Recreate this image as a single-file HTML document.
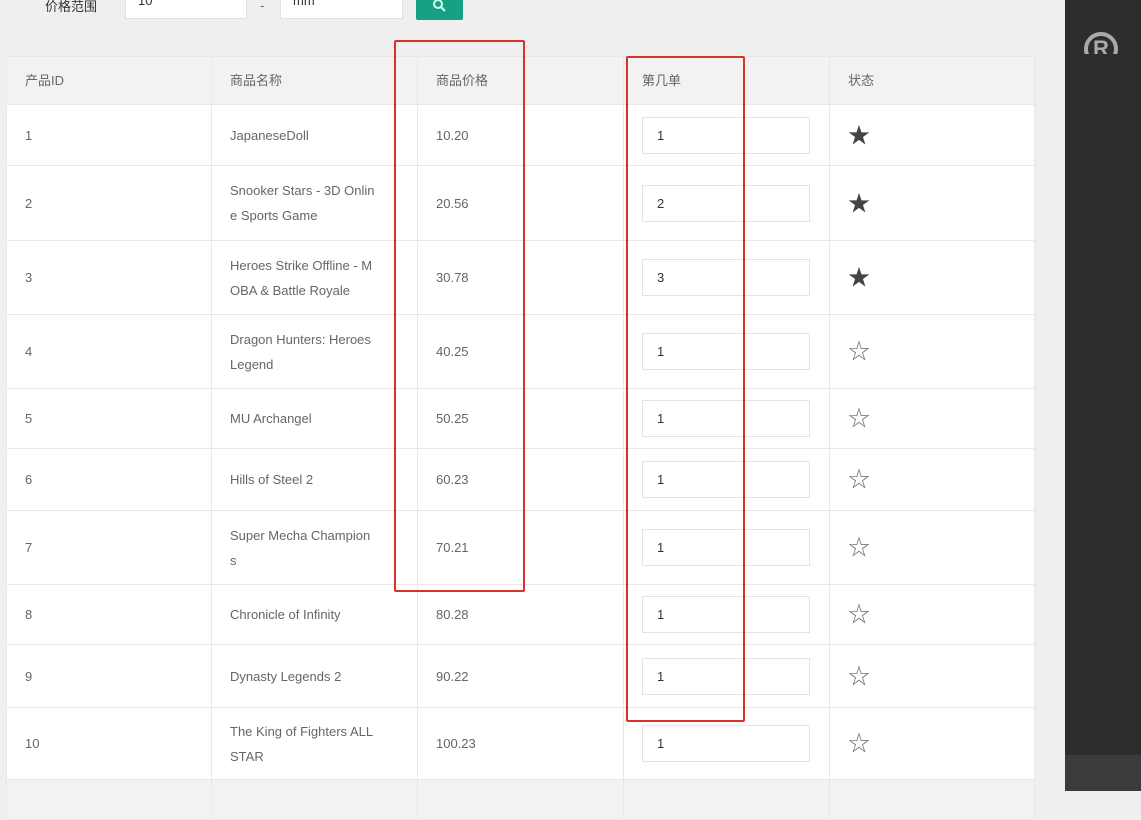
<!DOCTYPE html>
<html><head><meta charset="utf-8"><style>
*{box-sizing:border-box;margin:0;padding:0}
body{width:1141px;height:791px;overflow:hidden;background:#efefef;font-family:"Liberation Sans","Noto Sans CJK SC",sans-serif;font-size:13px;color:#666;position:relative}
.side{position:absolute;left:1065px;top:0;width:76px;height:791px;background:#2d2e2c}
.side2{position:absolute;left:1065px;top:755px;width:76px;height:36px;background:#3b3b3b}
.logo{position:absolute;left:1084px;top:32px;width:36px;height:22px;overflow:hidden}
.logo span{display:block;width:34px;height:34px;border:4px solid #aaa;border-radius:50%;color:#aaa;font-weight:bold;font-size:22px;line-height:26px;text-align:center}
.abs{position:absolute}
.inp{position:absolute;background:#fff;border:1px solid #e3e3e3}
table{position:absolute;left:6px;top:56px;border-collapse:collapse;table-layout:fixed;width:1028px;background:#fff}
td,th{border:1px solid #e8e8e8;padding:0 18px;text-align:left;font-weight:normal;vertical-align:middle;line-height:25px;color:#666;white-space:nowrap;overflow:hidden}
th{background:#f2f2f2;height:48px;color:#666}
td input{display:block;width:168px;height:37px;border:1px solid #e3e3e3;padding-left:14px;font-size:13px;color:#333;font-family:inherit}
.star{font-size:22px;color:#444}
.so{font-size:22px;color:#777}
.red{position:absolute;border:2px solid #d9322a;border-radius:2px}
</style></head><body>
<div class="abs" style="left:45px;top:-4px;color:#333">价格范围</div>
<div class="inp" style="left:125px;top:-10px;width:122px;height:29px;padding:2px 12px;color:#333">10</div>
<div class="abs" style="left:260px;top:-2px">-</div>
<div class="inp" style="left:280px;top:-10px;width:123px;height:29px;padding:2px 12px;color:#333">mm</div>
<div class="abs" style="left:416px;top:-10px;width:47px;height:30px;background:#16a085;border-radius:2px"><svg width="47" height="30"><circle cx="22" cy="14" r="4" fill="none" stroke="#cfe" stroke-width="2"/><path d="M25 17l4 4" stroke="#cfe" stroke-width="2"/></svg></div>
<table>
<colgroup><col style="width:205px"><col style="width:206px"><col style="width:206px"><col style="width:206px"><col style="width:205px"></colgroup>
<tr><th>产品ID</th><th>商品名称</th><th>商品价格</th><th>第几单</th><th>状态</th></tr>
<tr style="height:61px"><td>1</td><td>JapaneseDoll</td><td>10.20</td><td><input value="1"></td><td class="star">★</td></tr>
<tr style="height:75px"><td>2</td><td>Snooker Stars - 3D Onlin<br>e Sports Game</td><td>20.56</td><td><input value="2"></td><td class="star">★</td></tr>
<tr style="height:74px"><td>3</td><td>Heroes Strike Offline - M<br>OBA &amp; Battle Royale</td><td>30.78</td><td><input value="3"></td><td class="star">★</td></tr>
<tr style="height:74px"><td>4</td><td>Dragon Hunters: Heroes<br>Legend</td><td>40.25</td><td><input value="1"></td><td class="so">☆</td></tr>
<tr style="height:60px"><td>5</td><td>MU Archangel</td><td>50.25</td><td><input value="1"></td><td class="so">☆</td></tr>
<tr style="height:62px"><td>6</td><td>Hills of Steel 2</td><td>60.23</td><td><input value="1"></td><td class="so">☆</td></tr>
<tr style="height:74px"><td>7</td><td>Super Mecha Champion<br>s</td><td>70.21</td><td><input value="1"></td><td class="so">☆</td></tr>
<tr style="height:60px"><td>8</td><td>Chronicle of Infinity</td><td>80.28</td><td><input value="1"></td><td class="so">☆</td></tr>
<tr style="height:63px"><td>9</td><td>Dynasty Legends 2</td><td>90.22</td><td><input value="1"></td><td class="so">☆</td></tr>
<tr style="height:72px"><td>10</td><td>The King of Fighters ALL<br>STAR</td><td>100.23</td><td><input value="1"></td><td class="so">☆</td></tr>
<tr style="height:40px;background:#f2f2f2"><td></td><td></td><td></td><td></td><td></td></tr>
</table>
<div class="red" style="left:394px;top:40px;width:131px;height:552px"></div>
<div class="red" style="left:626px;top:56px;width:119px;height:666px"></div>
<div class="side"></div><div class="side2"></div>
<div class="logo"><span>R</span></div>
</body></html>
